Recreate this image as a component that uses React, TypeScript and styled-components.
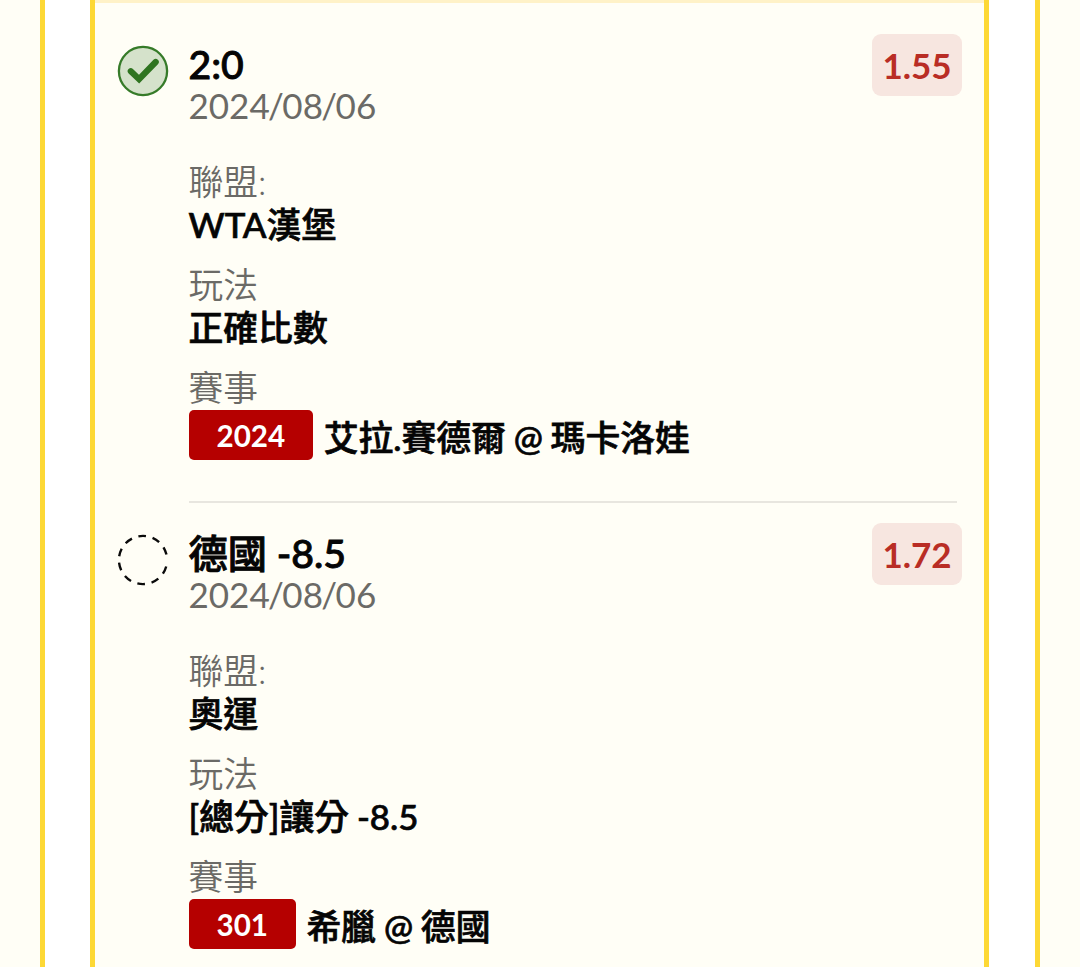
import styled, { createGlobalStyle } from 'styled-components';

interface Bet {
  won: boolean;
  title: string;
  date: string;
  odds: string;
  league: string;
  market: string;
  code: string;
  match: string;
}

const bets: Bet[] = [
  {
    won: true,
    title: '2:0',
    date: '2024/08/06',
    odds: '1.55',
    league: 'WTA漢堡',
    market: '正確比數',
    code: '2024',
    match: '艾拉.賽德爾 @ 瑪卡洛娃',
  },
  {
    won: false,
    title: '德國 -8.5',
    date: '2024/08/06',
    odds: '1.72',
    league: '奧運',
    market: '[總分]讓分 -8.5',
    code: '301',
    match: '希臘 @ 德國',
  },
];

const StatusIcon = ({ won }: { won: boolean }) => (
  <StyledIcon viewBox='0 0 52 52'>
    {won ? (
      <>
        <circle cx='26' cy='26' r='24.1' fill='#d5e2cb' stroke='#367b29' strokeWidth='2.3' />
        <path d='M13.8 26.2 L22.1 34.2 L38.7 17' fill='none' stroke='#2f7420' strokeWidth='6.2' strokeLinecap='round' />
      </>
    ) : (
      <circle
        cx='26'
        cy='26'
        r='24.1'
        fill='none'
        stroke='#0a0a0a'
        strokeWidth='2.4'
        strokeDasharray='7.8 6.7'
        strokeDashoffset='-6.6'
      />
    )}
  </StyledIcon>
);

const BetItem = ({ bet }: { bet: Bet }) => (
  <StyledItem>
    <StatusIcon won={bet.won} />
    <Detail>
      <Title>{bet.title}</Title>
      <BetDate>
        {bet.date.split('/').map(part => (
          <span key={part}>{part}</span>
        ))}
      </BetDate>
      <InfoList>
        <dt>聯盟:</dt>
        <dd>{bet.league}</dd>
        <dt>玩法</dt>
        <dd>{bet.market}</dd>
        <dt>賽事</dt>
        <Match>
          <Code>{bet.code}</Code>
          <Teams>{bet.match}</Teams>
        </Match>
      </InfoList>
    </Detail>
    <Odds>{bet.odds}</Odds>
  </StyledItem>
);

const App = () => {
  return (
    <>
      <GlobalStyle />
      <Page>
        <Panel>
          <Ticket>
            {bets.map(bet => (
              <BetItem key={bet.code} bet={bet} />
            ))}
          </Ticket>
        </Panel>
      </Page>
    </>
  );
};

const GlobalStyle = createGlobalStyle`
  * {
    box-sizing: border-box;
  }

  body {
    margin: 0;
    overflow: hidden;
    font-family: Lato, 'Noto Sans CJK TC', sans-serif;
    color: #050505;
  }
`;

const Page = styled.div`
  height: 100vh;
  padding: 0 40px;
  background-color: #fffef6;
`;

const Panel = styled.div`
  height: 100%;
  padding: 0 46px 0 45px;
  border: solid #fdd835;
  border-width: 0 5px;
  background-color: white;
`;

const Ticket = styled.ul`
  height: 100%;
  margin: 0;
  padding: 0;
  list-style: none;
  border: solid #fdd835;
  border-width: 0 5px;
  background: linear-gradient(#fff2c8 3px, #fffef6 3px);
  overflow: hidden;
`;

const StyledItem = styled.li`
  display: flex;
  align-items: flex-start;
  height: 489px;
  padding: 34px 22px 0;
`;

const StyledIcon = styled.svg`
  flex: none;
  width: 52px;
  height: 52px;
  margin: 11px 19.5px 0 0;
`;

const Detail = styled.div`
  flex: 1;
  height: 469px;
  margin-right: -85px;
  padding-top: 8px;

  li:first-child > & {
    border-bottom: 2px solid #e8e6df;
  }
`;

const Title = styled.h2`
  margin: 0;
  font-size: 39.2px;
  line-height: 43px;
  font-weight: 500;
  -webkit-text-stroke: 0.9px;
`;

const BetDate = styled.div`
  font-size: 35px;
  line-height: 40px;
  color: #6b6a66;

  span + span::before {
    content: '/';
    margin: 0 -1.6px;
  }
`;

const InfoList = styled.dl`
  margin: 36px 0 0;
  font-size: 34.8px;

  dt {
    line-height: 42px;
    font-weight: 350;
    color: #6b6a66;
  }

  dd {
    margin: 0 0 18px;
    line-height: 43px;
    font-weight: 500;
    word-spacing: -1px;
    -webkit-text-stroke: 0.7px;
  }
`;

const Match = styled.dd`
  display: flex;
  align-items: flex-start;
  white-space: pre;
`;

const Code = styled.span`
  height: 50px;
  margin: 1px 10.5px 0 0;
  padding: 0 28px;
  border-radius: 5px;
  background-color: #b50000;
  color: white;
  font-size: 29.6px;
  line-height: 52px;
  font-weight: bold;
  -webkit-text-stroke: 0;
`;

const Teams = styled.span`
  line-height: 57px;
`;

const Odds = styled.div`
  flex: none;
  width: 90px;
  height: 62px;
  border-radius: 9px;
  background-color: #f7e6e0;
  color: #b92d25;
  font-size: 35px;
  line-height: 63px;
  font-weight: bold;
  text-align: center;
`;

export default App;
